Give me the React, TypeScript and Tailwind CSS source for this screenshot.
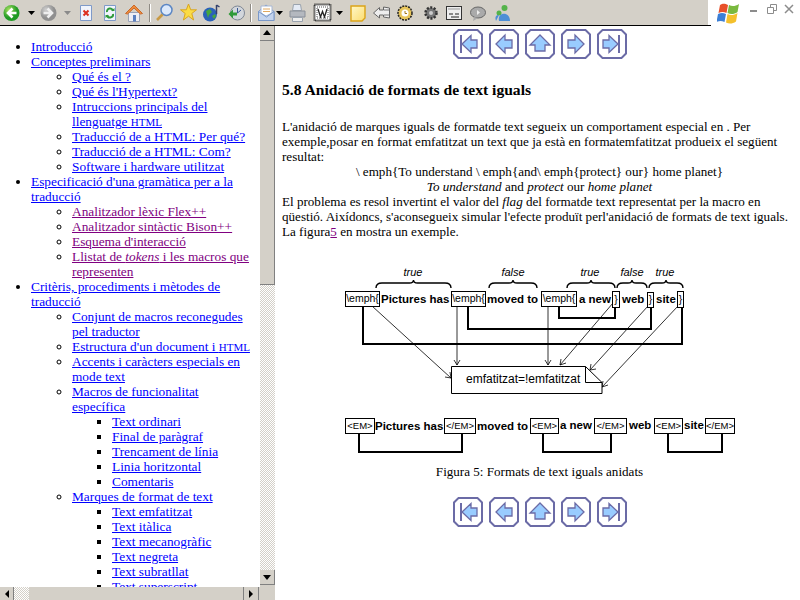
import { ReactNode } from 'react';

const A = ({ children, v }: { children: ReactNode; v?: boolean }) => (
  <a className={v ? 'text-[#800080] underline' : 'text-[#0000ff] underline'}>{children}</a>
);

const Li = ({ children, kind }: { children: ReactNode; kind: 'disc' | 'circle' | 'square' }) => (
  <li
    className={
      kind === 'disc' ? 'list-disc' : kind === 'circle' ? 'list-[circle]' : 'list-[square]'
    }
  >
    {children}
  </li>
);

const Tool = ({ children, w, className }: { children: ReactNode; w: number; className: string }) => (
  <svg width={w} height={22} viewBox={`0 0 ${w} 22`} className={`shrink-0 ${className}`}>
    {children}
  </svg>
);

const Caret = ({ dim, className }: { dim?: boolean; className: string }) => (
  <svg width="7" height="4" className={`shrink-0 ${className}`}>
    <path d="M0 0h7L3.500 4z" fill={dim ? '#8a8a8a' : '#000'} />
  </svg>
);

const Sep = ({ className }: { className: string }) => (
  <div className={`w-[2px] h-[18px] bg-[#8f8b84] border-r border-white shrink-0 ${className}`} />
);

const Toolbar = () => (
  <div className="h-[26px] flex shrink-0">
    <div className="w-[708px] bg-[#d4d0c8] border-b border-black flex items-center">
      <svg width="0" height="0" className="absolute">
        <defs>
          <radialGradient id="green" cx="35%" cy="30%">
            <stop offset="0" stopColor="#a8e060" />
            <stop offset="1" stopColor="#1f9a24" />
          </radialGradient>
          <radialGradient id="grey" cx="35%" cy="30%">
            <stop offset="0" stopColor="#d0d0d0" />
            <stop offset="1" stopColor="#8f8f8f" />
          </radialGradient>
          <linearGradient id="note" x1="0" y1="0" x2="1" y2="1">
            <stop offset="0" stopColor="#fff8c8" />
            <stop offset="1" stopColor="#fbdc70" />
          </linearGradient>
        </defs>
      </svg>
      <Tool w={17} className="ml-[3px]">
        <circle cx="8.500" cy="11" r="8" fill="url(#green)" />
        <path d="M13.500 11H6M9.500 6.500 5 11l4.500 4.500" stroke="#fff" strokeWidth="2.600" fill="none" />
      </Tool>
      <Caret className="ml-[8px]" />
      <Tool w={17} className="ml-[5px]">
        <circle cx="8.500" cy="11" r="8" fill="url(#grey)" />
        <path d="M3.500 11H11M7.500 6.500 12 11l-4.500 4.500" stroke="#eee" strokeWidth="2.600" fill="none" />
      </Tool>
      <Caret dim className="ml-[7px]" />
      <Tool w={16} className="ml-[7px]">
        <path d="M2.500 3.500h11v15h-11z" fill="#f0f4fc" stroke="#7f9ac9" />
        <path d="M5.500 8.500l5 5M10.500 8.500l-5 5" stroke="#dc2f1e" strokeWidth="2" />
      </Tool>
      <Tool w={16} className="ml-[8px]">
        <path d="M2.500 3.500h11v15h-11z" fill="#f0f4fc" stroke="#7f9ac9" />
        <path d="M5 10a3 3 0 0 1 6-1M11 12a3 3 0 0 1-6 1" stroke="#2f9a3a" strokeWidth="2" fill="none" />
        <path d="M9 9h3.500V6zM7 13H3.500v3z" fill="#2f9a3a" />
      </Tool>
      <Tool w={18} className="ml-[7px]">
        <path d="M3.500 10.500h11v9h-11z" fill="#eeeef4" stroke="#9aa3b8" />
        <path d="M0.500 11.500 9 3l8.500 8.500-2 .5L9 6l-6.500 6z" fill="#ee8c3c" stroke="#c9682a" />
        <path d="M8 13h3v6.500H8z" fill="#5a7fc0" />
      </Tool>
      <Sep className="ml-[6px]" />
      <Tool w={18} className="ml-[4px]">
        <circle cx="11.500" cy="8" r="5.500" fill="#dce9fb" stroke="#5b86c4" strokeWidth="1.500" />
        <path d="M7.500 12.500 2 18" stroke="#c99a45" strokeWidth="2.600" />
      </Tool>
      <Tool w={17} className="ml-[7px]">
        <path d="M8.500 2l2.200 5.800h5.800l-4.700 3.700 1.800 6.500-5.100-3.800L3.400 18l1.800-6.500L.5 7.800h5.800z" fill="#fbdc45" stroke="#d9a520" />
      </Tool>
      <Tool w={18} className="ml-[5px]">
        <circle cx="8" cy="12.500" r="7" fill="#2b62b8" />
        <path d="M4 9l4-2 2 3-3 3-1 3zM10 14l3-2 1 2-2 3z" fill="#45a83c" />
        <path d="M14.500 3v9M14.500 3l3 2" stroke="#33406b" strokeWidth="1.500" fill="none" />
      </Tool>
      <Tool w={17} className="ml-[8px]">
        <circle cx="9.500" cy="11" r="7" fill="#d2d6dc" stroke="#7f8794" />
        <path d="M9.500 6v5l3.500-3" stroke="#3b5a94" fill="none" />
        <path d="M0.500 12 5 7.500v3h4v3H5v3z" fill="#2f9a3a" />
      </Tool>
      <Sep className="ml-[5px]" />
      <Tool w={17} className="ml-[6px]">
        <path d="M.5 9.500 8 3l8 6.500v9H.5z" fill="#cfdcf2" stroke="#7a98c8" />
        <path d="M3 4h11v7l-6 3-5-3z" fill="#fff" stroke="#a8b8d4" />
        <path d="M.5 9.500 8.500 15l7.500-5.500v9H.5z" fill="#c4d4ee" stroke="#7a98c8" />
        <path d="M5 7h7M5 9.500h7" stroke="#e0a860" />
      </Tool>
      <Caret className="ml-[1px]" />
      <Tool w={17} className="ml-[6px]">
        <path d="M4.500 2.500h7l1 6h-9z" fill="#e4eaf4" stroke="#9aa3ae" />
        <path d="M1 9h15v6H1z" fill="#b4b8bf" stroke="#8a8f98" />
        <path d="M3.500 15.500h10v4h-10z" fill="#eee" stroke="#9aa3ae" />
      </Tool>
      <Tool w={20} className="ml-[7px]">
        <rect x="1.500" y="2.500" width="16" height="16" fill="#fff" stroke="#000" strokeWidth="2" strokeDasharray="1 1" />
        <rect x="4" y="5" width="11" height="11" fill="#fff" stroke="#555" strokeDasharray="1 1" />
        <path d="M5 7l2.500 8 2-5.500 2 5.500L14 7" stroke="#222" strokeWidth="1.300" fill="none" />
      </Tool>
      <Caret className="ml-[3px]" />
      <Tool w={16} className="ml-[7px]">
        <path d="M1 4h14v12l-3 3H1z" fill="url(#note)" stroke="#dba418" strokeWidth="1.400" />
      </Tool>
      <Tool w={18} className="ml-[7px]">
        <path d="M.5 11l6-5.500V8h4V5l6 1v10l-6-1v-2h-4v3z" fill="#eee" stroke="#666" />
        <path d="M11 8h5M11 13h5" stroke="#777" />
      </Tool>
      <Tool w={16} className="ml-[6px]">
        <circle cx="8" cy="11" r="7" fill="#e8c65c" stroke="#222" strokeWidth="1.500" strokeDasharray="2 1" />
        <circle cx="8" cy="11" r="3.500" fill="#fff" />
        <path d="M8 9v2.500h2" stroke="#a67a18" fill="none" />
      </Tool>
      <Tool w={16} className="ml-[10px]">
        <circle cx="8" cy="11" r="5.500" fill="#777" stroke="#333" strokeWidth="2.500" strokeDasharray="2 1.500" />
        <circle cx="8" cy="11" r="2" fill="#ccc" />
      </Tool>
      <Tool w={16} className="ml-[7px]">
        <rect x=".5" y="4.500" width="15" height="13" fill="#eee" stroke="#333" />
        <path d="M2 7h12" stroke="#999" />
        <path d="M3 12h4M9 12h4M5 15h8" stroke="#222" />
      </Tool>
      <Tool w={16} className="ml-[8px]">
        <ellipse cx="8" cy="10.500" rx="7.500" ry="5.500" fill="#aaa" stroke="#666" />
        <path d="M4 15l-1 4 5-3z" fill="#aaa" />
        <path d="M7 8l3 2.500-3 2.500z" fill="#eee" />
      </Tool>
      <Tool w={18} className="ml-[7px]">
        <circle cx="6" cy="11" r="2.500" fill="#54b34a" />
        <circle cx="11.500" cy="6" r="3" fill="#54b34a" />
        <path d="M3 19c-2-6 2-6 3-6zM6 19c-2-9 11-10 11 0z" fill="#4d8fd6" />
      </Tool>
    </div>
    <div className="flex-1 bg-white flex items-start relative">
      <div className="absolute left-0 bottom-0 w-[3px] h-px bg-black" />
      <svg width="24" height="22" viewBox="0 0 24 22" className="ml-[9px] mt-[2px] shrink-0">
        <path d="M3 3c3-2 5-1.500 8 0l-1.500 8c-3-1.500-5-1.500-8 0z" fill="#e8502a" />
        <path d="M12 3c3 1.500 6 1.500 10-1l-1.500 8c-3.500 2.500-7 2.500-10 1z" fill="#7ab93f" />
        <path d="M1 12c3-1.500 5-1.500 8 0l-1.500 8c-3-1.500-5-1.500-8 0z" fill="#3c7fd6" />
        <path d="M10.500 12c3 1.500 6 1.500 10-1L19 19.500c-3.500 2.500-7 2.500-10 1z" fill="#f4c02c" />
      </svg>
      <span className="ml-[9px] mt-[10px] w-[7px] h-[2px] bg-[#8c8c8c]" />
      <svg width="10" height="10" className="ml-[10px] mt-[4px]">
        <path d="M.5 3.500h6v6h-6zM3.500 3V.5h6v6H7" fill="none" stroke="#8c8c8c" />
      </svg>
      <svg width="10" height="10" className="ml-[7px] mt-[4px]">
        <path d="M1 1l8 8M9 1l-8 8" stroke="#8c8c8c" strokeWidth="1.500" />
      </svg>
    </div>
  </div>
);

const ScrollBtn = ({ d }: { d: string }) => (
  <div className="w-[15px] h-[15px] shrink-0 bg-[#d4d0c8] border-r border-b border-[#808080] flex items-center justify-center">
    <svg width="8" height="8">
      <path d={d} />
    </svg>
  </div>
);

const VScroll = () => (
  <div className="w-[15px] h-full shrink-0 flex flex-col bg-[repeating-conic-gradient(#d4d0c8_0_25%,#ffffff_0_50%)] bg-[length:2px_2px]">
    <ScrollBtn d="M4 1l4 5H0z" />
    <div className="h-[244px] bg-[#d4d0c8] border-r border-b border-[#808080] shrink-0" />
    <div className="flex-1" />
    <ScrollBtn d="M0 2h8L4 7z" />
    <div className="h-[2px] bg-[#d4d0c8] shrink-0" />
  </div>
);

const HScroll = () => (
  <div className="h-[13px] shrink-0 flex bg-[#d4d0c8]">
    <div className="w-[14px] border-r border-[#808080] flex items-center justify-center">
      <svg width="6" height="8"><path d="M5 0v8L1 4z" /></svg>
    </div>
    <div className="w-[15px] bg-[repeating-conic-gradient(#d4d0c8_0_25%,#ffffff_0_50%)] bg-[length:2px_2px]" />
    <div className="w-[215px] border-r border-[#808080]" />
    <div className="w-[15px] border-r border-[#808080] flex items-center justify-center">
      <svg width="6" height="8"><path d="M1 0v8l4-4z" /></svg>
    </div>
    <div className="flex-1" />
  </div>
);

const Sidebar = () => (
  <div className="w-[275px] h-full shrink-0 flex flex-col">
    <div className="flex-1 min-h-0 flex">
      <div className="flex-1 min-w-0 overflow-hidden">
        <ul className="pl-[31px] pt-[13px] text-[13.33px] leading-[15px] whitespace-nowrap">
          <Li kind="disc"><A>Introducció</A></Li>
          <Li kind="disc">
            <A>Conceptes preliminars</A>
            <ul className="pl-[41px]">
              <Li kind="circle"><A>Qué és el ?</A></Li>
              <Li kind="circle"><A>Qué és l'Hypertext?</A></Li>
              <Li kind="circle"><A>Intruccions principals del<br />llenguatge <span className="text-[11px] leading-none">HTML</span></A></Li>
              <Li kind="circle"><A>Traducció de a HTML: Per qué?</A></Li>
              <Li kind="circle"><A>Traducció de a HTML: Com?</A></Li>
              <Li kind="circle"><A>Software i hardware utilitzat</A></Li>
            </ul>
          </Li>
          <Li kind="disc">
            <A>Especificació d'una gramàtica per a la<br />traducció</A>
            <ul className="pl-[41px]">
              <Li kind="circle"><A v>Analitzador lèxic Flex++</A></Li>
              <Li kind="circle"><A v>Analitzador sintàctic Bison++</A></Li>
              <Li kind="circle"><A v>Esquema d'interacció</A></Li>
              <Li kind="circle"><A v>Llistat de <i>tokens</i> i les macros que<br />representen</A></Li>
            </ul>
          </Li>
          <Li kind="disc">
            <A>Critèris, procediments i mètodes de<br />traducció</A>
            <ul className="pl-[41px]">
              <Li kind="circle"><A>Conjunt de macros reconegudes<br />pel traductor</A></Li>
              <Li kind="circle"><A>Estructura d'un document i <span className="text-[11px] leading-none">HTML</span></A></Li>
              <Li kind="circle"><A>Accents i caràcters especials en<br />mode text</A></Li>
              <Li kind="circle">
                <A>Macros de funcionalitat<br />específica</A>
                <ul className="pl-[40px]">
                  <Li kind="square"><A>Text ordinari</A></Li>
                  <Li kind="square"><A>Final de paràgraf</A></Li>
                  <Li kind="square"><A>Trencament de línia</A></Li>
                  <Li kind="square"><A>Linia horitzontal</A></Li>
                  <Li kind="square"><A>Comentaris</A></Li>
                </ul>
              </Li>
              <Li kind="circle">
                <A>Marques de format de text</A>
                <ul className="pl-[40px]">
                  <Li kind="square"><A>Text emfatitzat</A></Li>
                  <Li kind="square"><A>Text itàlica</A></Li>
                  <Li kind="square"><A>Text mecanogràfic</A></Li>
                  <Li kind="square"><A>Text negreta</A></Li>
                  <Li kind="square"><A>Text subratllat</A></Li>
                  <Li kind="square"><A>Text superscript</A></Li>
                </ul>
              </Li>
            </ul>
          </Li>
        </ul>
      </div>
      <VScroll />
    </div>
    <HScroll />
  </div>
);

const NavBtn = ({ d, bar }: { d: string; bar?: string }) => (
  <svg width="30" height="30" viewBox="0 0 30 30" className="shrink-0">
    <path d="M5.500 1h19l4.500 4.500v19L24.500 29h-19L1 24.500v-19z" fill="#fff" stroke="#6b6ba6" strokeWidth="2" />
    <path d={d} fill="#99ccff" stroke="#6b6ba6" strokeWidth="1.300" />
    {bar && <path d={bar} stroke="#6b6ba6" strokeWidth="2" fill="none" />}
  </svg>
);

const NavRow = () => (
  <div className="flex justify-center gap-[6px] w-[515px]">
    <NavBtn d="M9 15l9-8.500V11h6v8h-6v4.500z" bar="M8 6v18" />
    <NavBtn d="M7 15l9-9v5h7v8h-7v5z" />
    <NavBtn d="M15 6l10 10h-5v6h-10v-6H5z" />
    <NavBtn d="M23 15l-9-9v5H7v8h7v5z" />
    <NavBtn d="M21 15l-9-8.500V11H6v8h6v4.500z" bar="M22 6v18" />
  </div>
);

const Box = ({ x, y, w, h, label, size = 10.5 }: { x: number; y: number; w: number; h: number; label: string; size?: number }) => (
  <g>
    <rect x={x + 0.5} y={y + 0.5} width={w} height={h} fill="#fff" stroke="#000" />
    <text x={x + w / 2 + 0.5} y={y + h - 4} textAnchor="middle" fontSize={size} fontFamily="Liberation Sans, sans-serif">
      {label}
    </text>
  </g>
);

const Word = ({ x, y, label }: { x: number; y: number; label: string }) => (
  <text x={x} y={y} fontSize="11.500" fontWeight="bold" fontFamily="Liberation Sans, sans-serif">
    {label}
  </text>
);

const Brace = ({ x1, x2, label, lx }: { x1: number; x2: number; label: string; lx: number }) => {
  const m = (x1 + x2) / 2;
  return (
    <g>
      <path
        d={`M${x1} 288c0-3 2-5 6-5H${m - 4}c2 0 4-1 4-3 0 2 2 3 4 3H${x2 - 6}c4 0 6 2 6 5`}
        fill="none"
        stroke="#000"
        strokeWidth="1.400"
      />
      <text x={lx} y={276} fontSize="11" fontStyle="italic" textAnchor="middle" fontFamily="Liberation Sans, sans-serif">
        {label}
      </text>
    </g>
  );
};

const Arrow = ({ d }: { d: string }) => <path d={d} fill="none" stroke="#000" strokeWidth="0.800" />;

const Figure = () => (
  <svg width="525" height="200" viewBox="275 262 525 200" className="block">
    <Brace x1={376} x2={451} label="true" lx={413} />
    <Brace x1={489} x2={537} label="false" lx={513} />
    <Brace x1={567} x2={615} label="true" lx={590} />
    <Brace x1={617} x2={647} label="false" lx={632} />
    <Brace x1={649} x2={683} label="true" lx={665} />

    <path d="M363 306v38h319v-37M468 306v23h183v-22M559 306v12h56v-10" fill="none" stroke="#000" strokeWidth="2" />

    <Arrow d="M372 306L451 378M451 378l-6-1M451 378l-1-6" />
    <Arrow d="M457 306v59M457 365l-3-5M457 365l3-5" />
    <Arrow d="M548 306v59M548 365l-3-5M548 365l3-5" />
    <Arrow d="M613 303L560 365M560 365l6-2M560 365l1-6" />
    <Arrow d="M648 306L590 370M590 370l6-1M590 370l1-6" />
    <Arrow d="M678 306L602 387M602 387l6-2M602 387l1-6" />

    <path d="M451.500 366.500h134l16.500 16v11h-150.500z" fill="#fff" stroke="#000" />
    <path d="M585.500 366.500v16h16.500" fill="none" stroke="#000" />
    <text x={466} y={383} fontSize="12" fontFamily="Liberation Sans, sans-serif">emfatitzat=!emfatitzat</text>

    <Box x={345} y={291} w={34} h={15} label="\emph{" />
    <Word x={381} y={303} label="Pictures has" />
    <Box x={451} y={291} w={34} h={15} label="\emph{" />
    <Word x={487} y={303} label="moved to" />
    <Box x={541} y={291} w={35} h={15} label="\emph{" />
    <Word x={579} y={303} label="a new" />
    <Box x={612} y={291} w={7} h={16} label="}" />
    <Word x={622} y={303} label="web" />
    <Box x={647} y={292} w={6} h={15} label="}" />
    <Word x={656} y={303} label="site" />
    <Box x={677} y={291} w={6} h={16} label="}" />

    <path d="M359 433v19h103v-19M543 433v19h68v-19M668 433v19h54v-19" fill="none" stroke="#000" strokeWidth="2" />
    <Box x={345} y={418} w={29} h={15} label="<EM>" size={9.500} />
    <Word x={375} y={430} label="Pictures has" />
    <Box x={444} y={418} w={31} h={15} label="</EM>" size={9.500} />
    <Word x={477} y={430} label="moved to" />
    <Box x={530} y={418} w={28} h={15} label="<EM>" size={9.500} />
    <Word x={560} y={429} label="a new" />
    <Box x={594} y={418} w={32} h={15} label="</EM>" size={9.500} />
    <Word x={629} y={429} label="web" />
    <Box x={654} y={418} w={28} h={15} label="<EM>" size={9.500} />
    <Word x={684} y={429} label="site" />
    <Box x={705} y={418} w={29} h={15} label="</EM>" size={9.500} />
  </svg>
);

const Article = () => (
  <div className="flex-1 h-full pl-[7px] overflow-hidden text-[13.100px] leading-[15px] text-black">
    <div className="pt-[3px]"><NavRow /></div>
    <h3 className="mt-[22px] text-[15.600px] leading-[18px] font-bold">5.8 Anidació de formats de text iguals</h3>
    <div className="mt-[20px] w-[515px] whitespace-nowrap">
      <p>
        L'anidació de marques iguals de formatde text segueix un comportament especial en . Per<br />
        exemple,posar en format emfatitzat un text que ja està en formatemfatitzat produeix el següent<br />
        resultat:
      </p>
      <p className="text-center">\ emph{'{'}To understand \ emph{'{'}and\ emph{'{'}protect{'}'} our{'}'} home planet{'}'}</p>
      <p className="text-center"><i>To understand</i> and<i> protect</i> our <i>home planet</i></p>
      <p>
        El problema es resol invertint el valor del <i>flag</i> del formatde text representat per la macro en<br />
        qüestió. Aixídoncs, s'aconsegueix simular l'efecte produït perl'anidació de formats de text iguals.<br />
        La figura<A v>5</A> en mostra un exemple.
      </p>
    </div>
    <div className="-ml-[7px] mt-[23px]"><Figure /></div>
    <p className="text-center w-[515px] mt-[2px]">Figura 5: Formats de text iguals anidats</p>
    <div className="mt-[18px]"><NavRow /></div>
  </div>
);

export default function App() {
  return (
    <div className="w-[800px] h-[600px] bg-white overflow-hidden flex flex-col font-['Liberation_Serif',serif]">
      <Toolbar />
      <div className="flex-1 flex min-h-0">
        <Sidebar />
        <Article />
      </div>
    </div>
  );
}
